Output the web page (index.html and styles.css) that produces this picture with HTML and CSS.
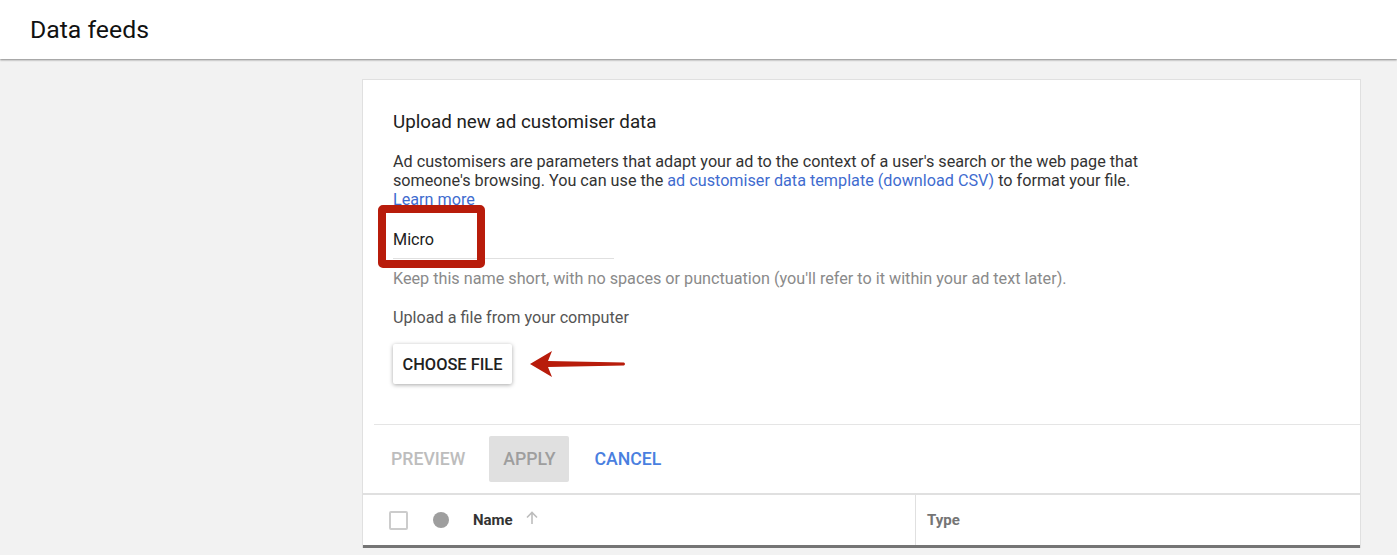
FILE: index.html
```html
<!DOCTYPE html>
<html lang="en">
<head>
<meta charset="utf-8">
<title>Data feeds</title>
<link rel="stylesheet" href="styles.css">
</head>
<body>
<header class="topbar">
  <h1 class="title">Data feeds</h1>
</header>
<main class="main">
  <section class="card">
    <div class="upload">
      <h2 class="upload-title">Upload new ad customiser data</h2>
      <p class="desc">Ad customisers are parameters that adapt your ad to the context of a user's search or the web page that someone's browsing. You can use the <a class="link" href="#">ad customiser data template (download CSV)</a> to format your file.<br><a class="link" href="#">Learn more</a></p>
      <div class="field">
        <div class="input">Micro</div>
        <div class="highlight"></div>
      </div>
      <p class="hint">Keep this name short, with no spaces or punctuation (you'll refer to it within your ad text later).</p>
      <p class="label">Upload a file from your computer</p>
      <div class="file-row">
        <button class="choose">CHOOSE FILE</button>
        <svg class="arrow" width="100" height="30" viewBox="0 0 100 30">
          <path d="M1 14 L23 1 L19 11 L95 12.5 Q97 14 95 15.5 L19 17 L23 27 Z" fill="#b81c0b"/>
        </svg>
      </div>
    </div>
    <div class="actions">
      <span class="btn btn-disabled">PREVIEW</span>
      <span class="btn btn-apply">APPLY</span>
      <span class="btn btn-cancel">CANCEL</span>
    </div>
    <div class="table-head">
      <div class="col col-name">
        <span class="checkbox"></span>
        <span class="dot"></span>
        <span class="th">Name</span>
        <svg class="sort" width="14" height="14" viewBox="0 0 14 14"><path d="M7 13V2M2 6.5L7 1.5l5 5" stroke="#bdbdbd" stroke-width="1.6" fill="none"/></svg>
      </div>
      <div class="col col-type">
        <span class="th th-grey">Type</span>
      </div>
    </div>
  </section>
</main>
</body>
</html>
```

FILE: styles.css
```css
* { box-sizing: border-box; }
html, body { margin: 0; padding: 0; }
body {
  background: #f2f2f2;
  font-family: Roboto, "Liberation Sans", Arial, sans-serif;
  color: #212121;
  height: 555px;
  overflow: hidden;
}
.topbar {
  background: #fff;
  height: 59px;
  padding-left: 30px;
  display: flex;
  align-items: center;
  box-shadow: 0 1px 2px rgba(0,0,0,0.45);
  position: relative;
  z-index: 1;
}
.title {
  margin: 0;
  font-size: 24.8px;
  font-weight: 400;
  color: #111;
  line-height: 30px;
}
.main {
  padding: 20px 0 0 362px;
}
.card {
  width: 999px;
  background: #fff;
  border: 1px solid #e0e0e0;
  border-bottom: none;
}
.upload {
  padding: 30px 0 40px 30px;
  margin-left: 11px;
  border-bottom: 1px solid #e5e5e5;
}
.upload-title {
  margin: 0 0 0 -11px;
  font-size: 18.8px;
  line-height: 24px;
  font-weight: 400;
  color: #212121;
}
.upload > p, .upload > .field, .upload > .file-row { margin-left: -11px; }
.desc {
  margin: 18px 0 0;
  font-size: 16.2px;
  line-height: 19px;
  color: #333;
  max-width: 800px;
}
.link { color: #3f6ccf; text-decoration: none; }
.field {
  position: relative;
  width: 221px;
  height: 50px;
  border-bottom: 1px solid #e0e0e0;
  display: flex;
  align-items: flex-end;
  padding-bottom: 9px;
}
.input {
  font-size: 16.2px;
  line-height: 19px;
  color: #212121;
}
.highlight {
  position: absolute;
  left: -15px;
  top: -4px;
  width: 107px;
  height: 63px;
  border: 8px solid #b81c0b;
  border-radius: 5px;
}
.hint {
  margin: 10px 0 0;
  font-size: 16.2px;
  line-height: 19px;
  color: #8a8a8a;
}
.label {
  margin: 20px 0 0;
  font-size: 16.2px;
  line-height: 19px;
  color: #555;
}
.file-row {
  margin-top: 17px;
  display: flex;
  align-items: center;
  gap: 17px;
}
.choose {
  width: 119px;
  height: 40px;
  border: none;
  background: #fff;
  border-radius: 2px;
  box-shadow: 0 1px 4px rgba(0,0,0,0.35);
  font-family: inherit;
  font-size: 16.4px;
  font-weight: 500;
  color: #212121;
  padding: 0;
}
.arrow { margin-top: 2px; }
.actions {
  height: 70px;
  display: flex;
  align-items: center;
  padding-left: 28px;
  border-bottom: 2px solid #e0e0e0;
}
.btn {
  font-size: 17.7px;
  font-weight: 500;
  height: 46px;
  display: flex;
  align-items: center;
  border-radius: 2px;
}
.btn-disabled { color: #bdbdbd; margin-right: 24px; }
.btn-apply { background: #e0e0e0; color: #9e9e9e; width: 80px; justify-content: center; }
.btn-cancel { color: #4a7fe0; margin-left: 25px; }
.table-head {
  display: flex;
  height: 53px;
  border-bottom: 3px solid #757575;
}
.col {
  display: flex;
  align-items: center;
}
.col-name {
  width: 553px;
  border-right: 1px solid #e0e0e0;
  padding-left: 26px;
}
.checkbox {
  width: 19px;
  height: 19px;
  border: 2px solid #cccccc;
  border-radius: 2px;
}
.dot {
  width: 16px;
  height: 16px;
  border-radius: 50%;
  background: #9e9e9e;
  margin-left: 25px;
}
.th {
  font-size: 15px;
  font-weight: 700;
  color: #333;
  margin-left: 24px;
}
.th-grey { color: #757575; margin-left: 11px; }
.sort { margin-left: 12px; margin-top: -4px; }
.col-type { flex: 1; }
```
